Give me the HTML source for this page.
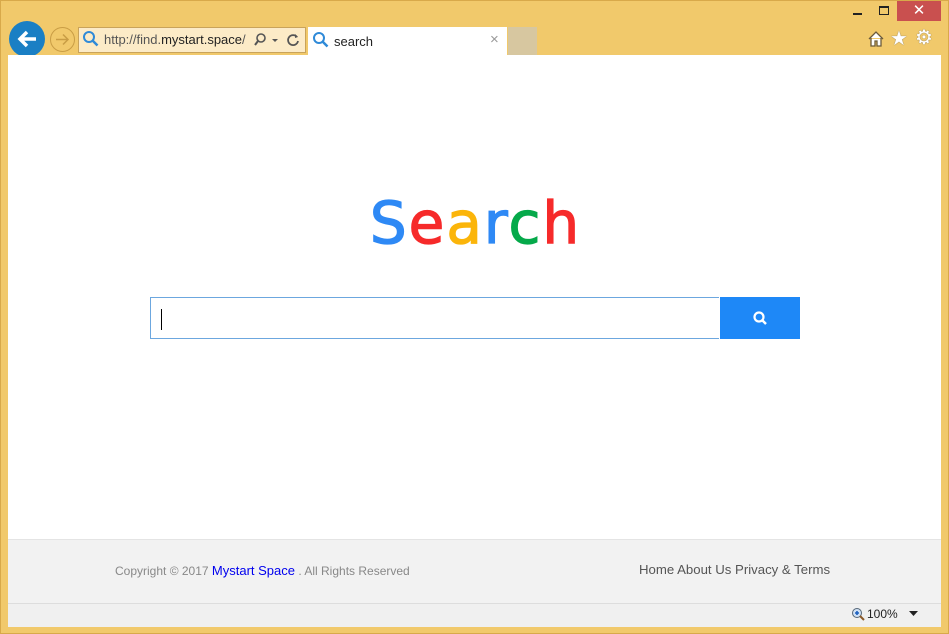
<!DOCTYPE html>
<html><head><style>
body{margin:0;width:949px;height:634px;background:#f1c96b;position:relative;overflow:hidden;font-family:"Liberation Sans",sans-serif}
.a{position:absolute}
</style></head><body>
<div class="a" style="left:0;top:0;width:947px;height:632px;border:1px solid #d8a94a"></div>
<div class="a" style="left:853px;top:13px;width:9px;height:2px;background:#222"></div>
<div class="a" style="left:879px;top:6px;width:8px;height:6px;border:1px solid #222;border-top-width:2px"></div>
<div class="a" style="left:897px;top:1px;width:44px;height:20px;background:#c9504f;color:#fff;font-size:15px;text-align:center;line-height:20px">✕</div>
<div class="a" style="left:9px;top:21px;width:36px;height:36px;border-radius:50%;background:#1a7fc4"></div>
<svg class="a" style="left:9px;top:21px" width="36" height="36"><path d="M27 18H11M18 11l-7 7 7 7" stroke="#fff" stroke-width="3.5" fill="none"/></svg>
<div class="a" style="left:50px;top:27px;width:23px;height:23px;border-radius:50%;border:1px solid #c99d45"></div>
<svg class="a" style="left:50px;top:27px" width="25" height="25"><path d="M6 12.5h12M13 7.5l5 5-5 5" stroke="#c99d45" stroke-width="1.5" fill="none"/></svg>
<div class="a" style="left:78px;top:27px;width:226px;height:24px;background:#fcebc7;border:1px solid #c9a35a"></div>
<svg class="a" style="left:82px;top:30px" width="18" height="18"><circle cx="7" cy="7" r="5" stroke="#2f8ad8" stroke-width="2" fill="none"/><path d="M10.5 10.5l5 5" stroke="#2f8ad8" stroke-width="2.5"/></svg>
<div class="a" style="left:104px;top:32px;font-size:13px;color:#555">http://find.<span style="color:#222">mystart.space</span>/</div>
<svg class="a" style="left:252px;top:31px" width="50" height="18"><circle cx="9" cy="7" r="4" stroke="#555" stroke-width="1.6" fill="none"/><path d="M6 10l-3 4" stroke="#555" stroke-width="2"/><path d="M20 8h6l-3 3z" fill="#555"/><path d="M45 6a5 5 0 1 0 1 4" stroke="#555" stroke-width="1.8" fill="none"/><path d="M43 3l3 3-3 1z" fill="#555"/></svg>
<div class="a" style="left:308px;top:27px;width:199px;height:28px;background:#fff"></div>
<svg class="a" style="left:312px;top:31px" width="18" height="18"><circle cx="7" cy="7" r="5" stroke="#2f8ad8" stroke-width="2" fill="none"/><path d="M10.5 10.5l5 5" stroke="#2f8ad8" stroke-width="2.5"/></svg>
<div class="a" style="left:334px;top:34px;font-size:13px;color:#222">search</div>
<div class="a" style="left:490px;top:31px;font-size:15px;color:#999">×</div>
<div class="a" style="left:508px;top:27px;width:29px;height:28px;background:#d7c7a0"></div>
<svg class="a" style="left:867px;top:30px" width="18" height="17"><path d="M2 9L9 2l7 7M4 8v8h4v-5h2v5h4V8" stroke="#6b5a3a" stroke-width="1.3" fill="#fff"/></svg>
<div class="a" style="left:890px;top:26px;font-size:20px;color:#fff;text-shadow:0 0 1px #555">★</div>
<div class="a" style="left:915px;top:25px;font-size:20px;color:#fff;text-shadow:0 0 1px #555">⚙</div>
<div class="a" style="left:8px;top:55px;width:933px;height:484px;background:#fff"></div>
<div class="a" style="left:0;top:189px;width:949px;text-align:center;font-family:'DejaVu Sans',sans-serif;font-size:58px;-webkit-text-stroke:1.3px;letter-spacing:2px;padding-left:1px"><span style="color:#2e89f5">S</span><span style="color:#f62a2a">e</span><span style="color:#fbb50a">a</span><span style="color:#2e89f5">r</span><span style="color:#05a94a">c</span><span style="color:#f62a2a">h</span></div>
<div class="a" style="left:150px;top:297px;width:568px;height:40px;border:1px solid #6ca7df;border-right:none;background:#fff"></div>
<div class="a" style="left:161px;top:309px;width:1px;height:21px;background:#000"></div>
<div class="a" style="left:720px;top:297px;width:80px;height:42px;background:#1e88f7"></div>
<svg class="a" style="left:750px;top:308px" width="20" height="20"><circle cx="9" cy="9" r="4.5" stroke="#fff" stroke-width="2.2" fill="none"/><path d="M12 12l4 4" stroke="#fff" stroke-width="2.5"/></svg>
<div class="a" style="left:8px;top:539px;width:933px;height:64px;background:#f2f2f2;border-top:1px solid #e4e4e4"></div>
<div class="a" style="left:115px;top:563px;font-size:12px;color:#888">Copyright © 2017 <span style="color:#0000ee;font-size:13px">Mystart Space</span> . All Rights Reserved</div>
<div class="a" style="left:639px;top:562px;font-size:13.2px;color:#555">Home About Us Privacy &amp; Terms</div>
<div class="a" style="left:8px;top:603px;width:933px;height:23px;background:#f0f0f0;border-top:1px solid #ddd"></div>
<svg class="a" style="left:851px;top:607px" width="14" height="14"><circle cx="6" cy="6" r="4.5" fill="#cfe0f5" stroke="#567" stroke-width="1"/><path d="M4 6h4M6 4v4" stroke="#1a5fbf" stroke-width="1.6"/><path d="M9 9l4 4" stroke="#8a5a2a" stroke-width="2"/></svg>
<div class="a" style="left:867px;top:607px;font-size:12px;color:#222">100%</div>
<svg class="a" style="left:909px;top:611px" width="9" height="6"><path d="M0 0h9L4.5 5z" fill="#222"/></svg>
</body></html>
